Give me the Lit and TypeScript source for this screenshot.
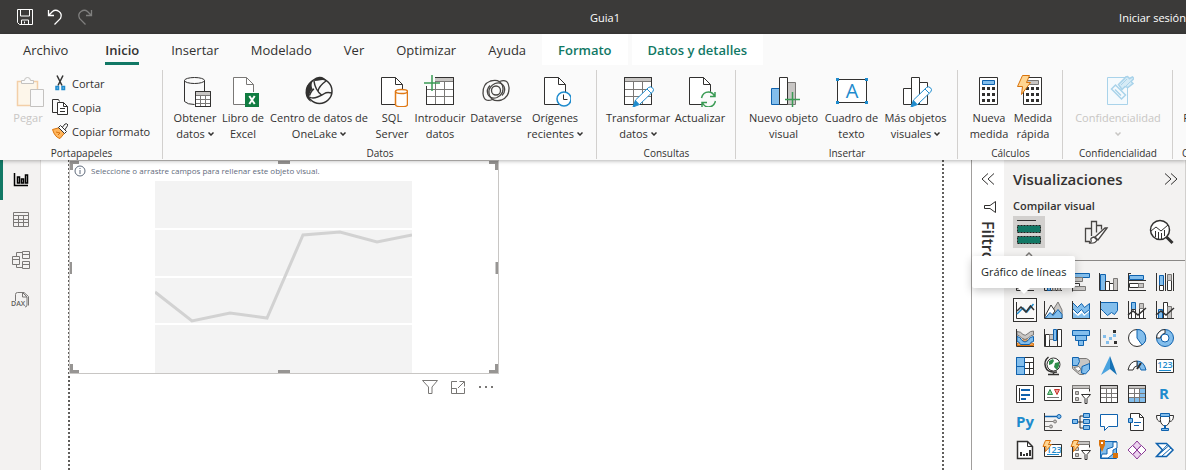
import { LitElement, html, css, svg } from "lit";
import { customElement, property, state } from "lit/decorators.js";
import { classMap } from "lit/directives/class-map.js";

const iconStyles = css`
  svg { display: block; fill: none; stroke-width: 1; flex: none; }
  .k { stroke: #323130; }
  .kw { stroke: #323130; fill: #fff; }
  .kf { fill: #323130; }
  .g { stroke: #7a7876; }
  .gf { fill: #c8c6c4; stroke: #7a7876; }
  .b { stroke: #0f62ae; }
  .bw { stroke: #0f62ae; fill: #fff; }
  .bf { stroke: #0f62ae; fill: #83beec; }
  .lf { fill: #83beec; }
  .s { stroke: #1e8bcd; }
  .sw { stroke: #1e8bcd; fill: #fff; }
  .n { stroke: #3a9b54; }
  .o { stroke: #d9730b; fill: #ffd591; }
  .w15 { stroke-width: 1.5; }
  .w2 { stroke-width: 2; }
  .glyph { font-family: "Open Sans", sans-serif; stroke: none; fill: #1e8bcd; text-anchor: middle; }
`;

const page = svg`<path class="kw" d="M5.500 2.500h14l7 7v20h-21z"/><path class="k" d="M19.500 2.500v7h7"/>`;
const pencil = svg`<path class="sw" d="M11 32l2.500-7L26.500 12.500q2-1.500 4 .3t.3 4L17.500 29.500z"/><path class="s" d="M25 14l4 4"/><path fill="#1e8bcd" d="M11 32l2.500-7 4 4.300z"/>`;
const calc = svg`<path class="kw" d="M6.500 2.500h18v27h-18z"/><path stroke="#323130" stroke-width="3" stroke-dasharray="3 2" d="M9 13.500h13M9 19.500h13M9 25.500h13"/>`;
const sheet = svg`<path class="kw" d="M2.500 2.500h27v27h-27z"/><path fill="#c8c6c4" d="M3 3h26v3H3z"/><path class="g" d="M3 6.500h26M3 14.500h26M3 21.500h26M11.500 7v22M20.500 7v22"/><path class="k" d="M2.500 2.500h27v27h-27z"/>`;
const bolt = svg`<path class="o" d="M5.500.500h7l-3 7h4l-9 12 1-8h-5z"/>`;

const big: Record<string, unknown> = {
  paste: svg`<path stroke="#f3cfa8" stroke-width="1.500" fill="#fdf6ea" d="M5.500 6.500h20v24h-20z"/><path stroke="#c4c2c0" fill="#fafafa" d="M9.500 8.500v-3h3q0-3 3-3t3 3h3v3z"/><path stroke="#c4c2c0" fill="#fafafa" d="M18.500 14.500h13v17h-13z"/>`,
  data: svg`<path class="k" d="M5.500 5.500v21q3 3 10 3M25.500 5.500v11"/><ellipse class="k" cx="15.500" cy="5.500" rx="10" ry="3"/><path class="kw" d="M16.500 16.500h15v15h-15z"/><path fill="#c8c6c4" d="M17 17h14v3H17z"/><path class="g" d="M17 20.500h14M17 24.500h14M17 28.500h14M21.500 20v11M26.500 20v11"/><path class="k" d="M16.500 16.500h15v15h-15z"/>`,
  excel: svg`<path class="g" fill="#fff" d="M26.500 17v-7.500l-7-7h-13v27h12"/><path class="g" d="M19.500 2.500v7h7"/><path fill="#107c41" d="M18 18h14v14H18z"/><path stroke="#fff" stroke-width="2" d="M22.300 21l5.400 8M27.700 21l-5.400 8"/>`,
  lake: svg`<circle class="k w15" cx="16.500" cy="16" r="12.500"/><path class="kf" d="M10.500 4.500Q13 1.500 17 1.800 21.500 2 23.500 6q-3-1.500-6-.8t-6 .8zM10 5.500Q2 9.500 2.500 18q.5 6 5.500 9-2.500-4-1.500-8 .5-3 3-5-2-4 .5-8.500z"/><path class="k w15" d="M11 6q1 9 8 14.500M23 6q-7 5-8 10M6.500 22q3 2 8 0t7-3.500 7.500-.5M6.500 20.500q2-5.500 4.500-6.500"/>`,
  sql: svg`${page}<path d="M19.500 16.500v13c0 3 12 3 12 0v-13" stroke="#e07a17" stroke-width="1.500" fill="#fff"/><ellipse cx="25.500" cy="16.500" rx="6" ry="2" stroke="#e07a17" stroke-width="1.500" fill="#fff"/>`,
  enter: svg`${sheet}<path fill="#fafafa" d="M0 0h11v7H7v4H0z"/><path class="n w15" d="M8 0v16M0 8h16"/>`,
  dataverse: svg`<g stroke="#484644" stroke-width="1.300"><ellipse cx="16" cy="15.500" rx="4.500" ry="4.500"/><path d="M12.500 24.500Q4 28 3 18.500 2.500 9 10.500 6q9-2.500 12 4.500 2.500 8-5.500 12-6 2-9-3-2-5 2-9"/><path d="M19.500 6.500Q28 3 29 12.500 29.500 22 21.500 25q-9 2.500-12-4.500-2.500-8 5.500-12 6-2 9 3 2 5-2 9"/></g>`,
  recent: svg`${page}<circle class="sw w15" cx="25" cy="24" r="7"/><path class="k" d="M24.500 19.500v5h4"/>`,
  transform: svg`${sheet}${pencil}`,
  refresh: svg`${page}<circle cx="24.500" cy="24.500" r="8" fill="#fafafa"/><path class="n w15" d="M17.500 23q1.500-6 7-6 4 0 6 4M31 17v4.500h-5M31.500 26q-1.500 6-7 6-4 0-6-4M18 32v-4.500h5"/>`,
  newVisual: svg`<path class="bf" d="M3.500 13.500h8v16h-8z"/><path class="gf" d="M19.500 7.500h8v22h-8z"/><path class="kw" d="M11.500 2.500h8v27h-8z"/><path class="n w15" d="M24.500 17v15M17 24.500h15"/>`,
  textBox: svg`<path class="kw" d="M1.500 4.500h29v23h-29z"/><path fill="#1e8bcd" d="M0 3h3v3H0zM29 3h3v3h-3zM0 26h3v3H0zM29 26h3v3h-3z"/><text class="glyph" x="16" y="23" font-size="20">A</text>`,
  moreVisuals: svg`<path class="kw" d="M3.500 13.500h8v16h-8zM19.500 7.500h8v22h-8zM11.500 2.500h8v27h-8z"/>${pencil}`,
  calc: svg`${calc}<path class="bf" d="M9.500 5.500h12v4h-12z"/>`,
  quickCalc: svg`${calc}<path class="gf" d="M9.500 5.500h12v4h-12z"/>${bolt}`,
  label: svg`<g stroke="#a9d3ea" fill="#f5fafd"><path d="M5.500 2.500h20v27h-20z"/><path d="M9.500 14l4-4 10 10-4 4zM13 14.500l6 6" stroke-width="1.500"/><path d="M16.500 9.500l6-6q1-2 3-2l2 2 3-1.500 1.500 1.500-3 3 2 2-5 4-3-1-3 3z" fill="#d6ebf6" stroke-width="1.500"/><path d="M19 10l6-6M22 13l6-6"/></g>`,
  publish: svg`<path class="kw" d="M9.500 2.500h17v27h-17z"/>`,
};

const small: Record<string, unknown> = {
  cut: svg`<path class="k w15" d="M5 .500l5 10M11 .500l-5 10"/><path class="s w15" fill="#83beec" d="M4 11.500h2.500v3H4zM10 11.500h2.500v3H10z"/>`,
  copy: svg`<path class="k" d="M5 13.500H.500V.500h6l1 2"/><path class="kw" d="M5.500 3.500h6l4 4v8h-10z"/><path class="k" d="M11.500 3.500v4h4M8 9.500h5M8 12.500h5"/>`,
  brush: svg`<path class="k" d="M9 6l4-5q2-1 3 1l-4 6z"/><path d="M.5 6.500L8 4.500l5 5-5 6q-5-1-7.500-9z" stroke="#d9730b" fill="#ffb55c"/><path class="kw" d="M6.500 4.500l2-2 6 6-2 2z"/><path stroke="#d9730b" d="M4 9l4 1-2 2"/>`,
};

const axis = svg`<path class="k" d="M3.500 3v17.500H21"/>`;
const filterGrid = svg`<path class="kw" d="M3.500 20.500v-17h17v6M3.500 20.500h9"/><path class="gf" d="M3.500 3.500h17v3h-17zM6.500 9.500h3v3h-3zM6.500 15.500h3v3h-3z"/><path class="kw" d="M12.500 12.500h9l-3.500 4v5h-2v-5z"/>`;
const miniBolt = svg`<path class="o" d="M4.500 2.500h5l-2 4h3l-6 7 .5-5h-3z"/>`;

const gallery: [string, unknown][] = [
  ["Gráfico de barras apiladas", svg`${axis}<path class="bf" d="M4 5.500h9v3H4z"/><path class="gf" d="M4 15.500h6v3H4z"/>`],
  ["Gráfico de columnas apiladas", svg`${axis}<path class="bf" d="M6.500 5.500h3v15h-3z"/><path class="gf" d="M11.500 9.500h3v11h-3zM16.500 14.500h3v6h-3z"/>`],
  ["Gráfico de barras agrupadas", svg`<path class="bf" d="M3.500 3.500h17v4h-17z"/><path class="gf" d="M3.500 7.500h10v4h-10z"/><path class="kw" d="M3.500 13.500h7v3h-7z"/><path class="gf" d="M3.500 16.500h13v4h-13z"/><path class="k" d="M3.500 3.500v18"/>`],
  ["Gráfico de columnas agrupadas", svg`<path class="bf" d="M3.500 4.500h5v16h-5z"/><path class="kw" d="M8.500 11.500h4v9h-4z"/><path class="kw" d="M12.500 13.500h4v7h-4z"/><path class="gf" d="M16.500 8.500h4v12h-4z"/><path class="k" d="M2.500 3v17.500H21"/>`],
  ["Barras 100% apiladas", svg`<path class="k" d="M3.500 3v18M4 10.500h17M4 20.500h17M4 3.500h2"/><path class="bf" d="M4.500 5.500h14v4h-14z"/><path class="kw" d="M4.500 13.500h14v4h-14z"/><path class="gf" d="M13.500 13.500h5v4h-5z"/>`],
  ["Columnas 100% apiladas", svg`<path class="k" d="M3.500 3v18M12.500 3v18M20.500 3v18"/><path class="bf" d="M6.500 5.500h4v10h-4z"/><path class="kw" d="M6.500 15.500h4v5h-4zM14.500 10.500h4v10h-4z"/><path class="gf" d="M14.500 4.500h4v6h-4z"/>`],
  ["Gráfico de líneas", svg`<path class="k" d="M3.500 4v16.500H21"/><path class="s w15" d="M4 16l6-6 4 4 6.500-8"/><path class="k w15" d="M4 13l4-4 5 5 4.500-6 3.500 4"/>`],
  ["Gráfico de áreas", svg`<path class="gf" d="M12 12l5-8 4 8v8h-9z"/><path class="kw" d="M4 18l6-11 4 6-5 7H4z"/><path class="bf" d="M4 20.500l5-6 3 3 5-6 4 5v4z"/><path class="k" d="M3.500 3v17.500H21"/>`],
  ["Gráfico de áreas apiladas", svg`<path class="bf" d="M3.500 12.500l5 4 4-3 3 3 5-4v8h-17z"/><path fill="#fff" d="M4 9l5 4 4-3 3 3 4-3v4l-5 4-2-3-4 3-5-4z"/><path class="bf" d="M3.500 4.500l5 5 4-4 3 4 5-4v6l-5 4-3-4-4 4-5-5z"/><path class="k" d="M3.500 3v17.500H21"/>`],
  ["Áreas 100% apiladas", svg`<path class="bf" d="M3.500 4.500h17v8l-3 4-3-2-4 3-4-4-3-3z"/><path class="k" d="M3.500 3v17.500H21"/>`],
  ["Líneas y columnas apiladas", svg`<path class="bf" d="M6.500 4.500h4v7h-4z"/><path class="kw" d="M6.500 11.500h4v9h-4zM14.500 10.500h4v10h-4z"/><path class="gf" d="M14.500 5.500h4v5h-4z"/>${axis}<path class="k w15" d="M3 17l5-4 5 4 8-7"/>`],
  ["Líneas y columnas agrupadas", svg`<path class="bf" d="M5.500 11.500h4v9h-4z"/><path class="kw" d="M10.500 4.500h4v16h-4z"/><path class="gf" d="M14.500 8.500h4v12h-4z"/>${axis}<path class="k w15" d="M3 17l5-4 5 4 8-7"/>`],
  ["Gráfico de la barra de herramientas", svg`<path stroke="#d9730b" fill="#f0a35a" d="M4 17.500q4 0 6-4 3-2 5 1t5.500 3v2H4z"/><path class="bf" d="M4 10.500q3 0 5 4 3 3 6 0 2-4 5.500-4v5q-3 0-4 3h-9q-1-3-3.500-3z"/><path class="gf" d="M4 5.500q4 0 6 3 2 2 5-1 2-2.500 5.500-2.500v4q-3 0-5 3-3.500 3-7 0-2-3-4.500-3z"/>${axis}`],
  ["Gráfico de cascada", svg`${axis}<path class="kw" d="M4.500 8.500h4v12h-4z"/><path class="gf" d="M8.500 8.500h4v5h-4z"/><path class="bf" d="M12.500 3.500h3v11h-3z"/><path class="kw" d="M16.500 3.500h4v17h-4z"/>`],
  ["Embudo", svg`<path class="bf" d="M3.500 4.500h17v5h-17zM6.500 9.500h11v5h-11zM9.500 14.500h5v5h-5z"/>`],
  ["Gráfico de dispersión", svg`<path class="g" d="M3.500 3v17.500H21"/><path class="lf" d="M6 9h3v3H6zM12 11h3v3h-3zM16 8h3v3h-3zM9 15h3v3H9z"/><path class="kf" d="M16 4h3v3h-3zM17 15h3v3h-3z"/>`],
  ["Gráfico circular", svg`<circle class="kw" cx="12" cy="12" r="8.500"/><path class="bf" d="M12 3.500a8.500 8.500 0 0 1 5 15.500L12 12z"/>`],
  ["Gráfico de anillos", svg`<circle class="bf" cx="12" cy="12" r="8.500"/><path class="kw" d="M3.500 12A8.500 8.500 0 0 1 12 3.500v4A4.500 4.500 0 0 0 7.500 12z"/><circle class="bw" cx="12" cy="12" r="4"/>`],
  ["Treemap", svg`<path class="kw" d="M3.500 3.500h17v17h-17z"/><path class="bf" d="M3.500 3.500h8v17h-8z"/><path class="b" d="M4 12.500h7"/><path class="k" d="M12 8.500h8M12 14.500h8M16.500 9v11"/>`],
  ["Mapa", svg`<circle class="kw" cx="12.500" cy="10.500" r="6.500"/><path fill="#2f8f4b" d="M8 7l4-2 1 2-2 3-3 1zM14 9l4-1v4l-2 4-3-3z"/><path class="k w15" d="M7.500 3Q2.500 7 4.500 13t11.500 5M7 20.500h11M12.500 18v2"/>`],
  ["Mapa coroplético", svg`<path class="gf" d="M3.500 4.500h14l3 2v8l-6 6h-4l-7-6z"/><path class="bf" d="M3.500 3.500h6l1 4-2 4h-5zM13 12.500l7.500-3v6l-4 4.500-4-1z"/><path fill="#fff" stroke="#7a7876" d="M5 13.500l5-1 2 3-3 2z"/>`],
  ["Azure Maps", svg`<path fill="#4aa3df" d="M13 2L4 21l9-6z"/><path fill="#1672b5" d="M13 2l7 19-7-6z"/>`],
  ["Medidor", svg`<path class="bf" d="M12 7q7 0 9 9h-5q-1-4-4-4z"/><path class="kw" d="M3 16q2-9 9-9v5q-3 0-4 4z"/><path class="k w2" d="M12 15l4-6"/>`],
  ["Tarjeta", svg`<path class="kw" d="M3.500 5.500h17v13h-17z"/><text class="glyph" x="12" y="14" font-size="9" font-weight="600">123</text><path class="s" d="M6 16.500h12"/>`],
  ["Tarjeta de varias filas", svg`<path class="kw" d="M3.500 3.500h17v17h-17z"/><path class="b w2" d="M8 8h9M8 13h9M8 17h5"/><path class="k" d="M6.500 6v13"/>`],
  ["KPI", svg`<path class="kw" d="M3.500 4.500h17v14h-17z"/><path stroke="#2f8f4b" fill="#8fcf9f" d="M6.500 12.500l2.500-5 2.500 5z"/><path stroke="#c8352f" fill="#f09a96" d="M13.500 7.500h5l-2.500 5z"/><path class="g" d="M6 15.500h12"/>`],
  ["Segmentación de datos", filterGrid],
  ["Tabla", svg`<path class="kw" d="M3.500 3.500h17v17h-17z"/><path class="gf" d="M3.500 3.500h17v3h-17z"/><path class="g" d="M4 11.500h16M4 15.500h16M9.500 7v13M14.500 7v13"/><path class="k" d="M3.500 3.500h17v17h-17z"/>`],
  ["Matriz", svg`<path class="kw" d="M3.500 3.500h17v17h-17z"/><path class="gf" d="M3.500 3.500h17v3h-17z"/><path class="lf" d="M15 7h5v13H4v-4h11z"/><path class="g" d="M4 11.500h16M4 15.500h16M9.500 7v13M14.500 7v13"/><path class="k" d="M3.500 3.500h17v17h-17z"/>`],
  ["Objeto visual de R", svg`<text class="glyph" x="11" y="17" font-size="15" font-weight="700">R</text>`],
  ["Objeto visual de Python", svg`<text class="glyph" x="12" y="17" font-size="15" font-weight="700">Py</text>`],
  ["Elementos influyentes clave", svg`<path class="k" d="M3.500 3v17.500H21"/><path class="b w15" d="M4 6.500h12"/><circle class="bf" cx="18" cy="6.500" r="2"/><path class="g" d="M4 11.500h8M4 16.500h4"/><circle class="gf" cx="14" cy="11.500" r="1.500"/><circle class="gf" cx="10" cy="16.500" r="1.500"/>`],
  ["Esquema jerárquico", svg`<path class="k" d="M8 12h6M14 6h-3v12h3"/><path class="bf" d="M3.500 9.500h5v4h-5zM14.500 3.500h6v4h-6zM14.500 9.500h6v4h-6zM14.500 15.500h6v4h-6z"/>`],
  ["Preguntas y respuestas", svg`<path class="bw" d="M3.500 4.500h17v12h-9l-4 4v-4h-4z"/>`],
  ["Narración", svg`<path class="kw" d="M5.500 3.500h9l4 4v13h-13z"/><path class="k" d="M14.500 3.500v4h4"/><path class="bf" d="M3.500 8.500h4v4h-4z"/><path class="b" d="M9 12.500h7M9 15.500h5"/>`],
  ["Objetivos", svg`<path class="kw" d="M7.500 6.500h9q1 7-3 9h-3q-4-2-3-9zM7 5.500H3.500q0 6 4 6M17 5.500h3.500q0 6-4 6"/><path class="bf" d="M7.500 3.500h9v3h-9zM8.500 18.500h7v2h-7z"/><path class="b w2" d="M12 15v4"/>`],
  ["Informe paginado", svg`<path class="kw w15" d="M4.500 3.500h10l5 5v12h-15z"/><path class="k" d="M14.500 3.500v5h5"/><path class="k w2" d="M8 18v-4M11 18v-2M14 18v-3M17 18v-6"/>`],
  ["Tarjeta nueva", svg`<path class="kw" d="M3.500 6.500h17v12h-17z"/><text class="glyph" x="13" y="15" font-size="9" font-weight="600">123</text><path class="s" d="M6 16.500h12"/>${miniBolt}`],
  ["Segmentación nueva", svg`${filterGrid}${miniBolt}`],
  ["ArcGIS Maps", svg`<path class="bf" d="M3.500 3.500h16v17h-16z"/><path fill="#fff" stroke="#0f62ae" d="M4 20l1-4h5v-5l6-2V4h4v6l-4 2v4l-5 4z"/><path fill="#d9730b" d="M2 2h6v5l-3 7-3-7zM16 15h5v5h-5z"/><path fill="#fff" d="M4 4h2v2H4z"/>`],
  ["Power Apps", svg`<g stroke="#8b3a96" fill="#ecd3ef"><path d="M12 3l4 4.500-4 4.500-4-4.500zM12 12l4 4.500-4 4.500-4-4.500z"/><path fill="#fff" d="M7.500 7.500L12 12l-4.500 4.500L3 12zM16.500 7.500L21 12l-4.500 4.500L12 12z"/></g>`],
  ["Power Automate", svg`<path class="bw w15" d="M3.500 5.500h10l6.500 6.500-6.500 6.500h-10L9.500 12z"/><path class="b" d="M9.500 12l5-5.500M5 17l10.500-9M9 18l9-8"/>`],
];

const nav: [string, unknown][] = [
  ["Vista de informe", svg`<path stroke="#000" stroke-width="1.500" d="M5.500 5v12.500H19M8.500 15v-6h2v6zM12.500 15v-4h2v4zM16.500 15V7h2v8z"/>`],
  ["Vista de tabla", svg`<path class="g" d="M4.500 4.500h15v14h-15zM4.500 7.500h15M4.500 11.500h15M4.500 14.500h15M9.500 7.500v11M14.500 7.500v11"/>`],
  ["Vista de modelo", svg`<path class="g" d="M3.500 8.500h7v8h-7zM3.500 11.500h7M13.500 3.500h7v7h-7zM13.500 6.500h7M13.500 13.500h7v7h-7zM13.500 16.500h7M7.500 8v-3.500h6M7.500 17v2.500h6"/>`],
  ["Vista de consultas DAX", svg`<path class="g" d="M6.500 13V6.500q0-2 2-2h5l4.500 4.500v8q0 2-2 2M13.500 4.500V9H18M9 4.500h6l4.500 4v9"/><path fill="#f3f2f1" d="M2 13h14v6H2z"/><text x="2" y="18" font-size="7" fill="#605e5c" font-family="Open Sans" font-weight="600">DAX</text>`],
];

interface Command { icon: string; lines: string[]; menu?: boolean; off?: boolean }

@customElement("ribbon-group")
class RibbonGroup extends LitElement {
  @property() caption = "";
  @property({ attribute: false }) commands: Command[] = [];

  static styles = [iconStyles, css`
    :host { display: flex; flex-direction: column; flex: none; padding: 5px 8px 0 9px; border-right: 1px solid #d2d0ce; color: #323130; box-sizing: border-box; }
    .items { display: grid; grid-template-columns: var(--columns); flex: 1; align-items: start; }
    button { display: flex; flex-direction: column; align-items: center; padding: 0; border: 0; background: none; font: inherit; line-height: 16px; color: inherit; white-space: nowrap; min-width: 0; }
    .icon { width: 32px; height: 32px; margin-bottom: 3px; }
    .line { display: flex; align-items: center; gap: 3px; height: 16px; }
    .off { color: #c8c6c4; }
    .arrow { width: 6px; height: 4px; stroke: currentColor; stroke-width: 1.5; }
    .caption { font-size: 10px; line-height: 12px; text-align: center; white-space: nowrap; }
  `];

  render() {
    const arrow = html`<svg class="arrow" viewBox="0 0 6 4"><path d="M.500 .500L3 3 5.500 .500"/></svg>`;
    return html`
      <div class="items">
        ${this.commands.map((c) => html`
          <button class=${classMap({ off: !!c.off })} ?disabled=${!!c.off}>
            <svg class="icon" viewBox="0 0 32 32">${big[c.icon]}</svg>
            ${c.lines.map((l, i) => html`<span class="line">${l}${c.menu && i === c.lines.length - 1 ? arrow : ""}</span>`)}
          </button>`)}
        <slot></slot>
      </div>
      <div class="caption">${this.caption}</div>`;
  }
}

@customElement("app-root")
class AppRoot extends LitElement {
  @state() private tab = "Inicio";
  @state() private visual = "Gráfico de líneas";

  static styles = [iconStyles, css`
    :host { display: flex; flex-direction: column; height: 100vh; overflow: hidden; font-family: "Open Sans", "Noto Sans", sans-serif; font-size: 11px; color: #323130; background: #fff; }
    button { font: inherit; color: inherit; background: none; border: 0; padding: 0; }
    header { display: grid; grid-template-columns: 1fr auto 1fr; align-items: center; flex: none; height: 34px; background: #3b3a39; color: #fff; box-sizing: border-box; overflow: hidden; }
    .quick { display: flex; gap: 10px; padding-left: 15px; stroke: #fff; }
    .quick .faded { opacity: .35; }
    .doc { padding-left: 24px; }
    .signin { justify-self: end; white-space: nowrap; }
    .top { flex: none; background: #fafafa; height: 126px; display: flex; flex-direction: column; overflow: hidden; }
    .shade { flex: none; position: relative; z-index: 1; box-shadow: 0 1px 4px rgba(0, 0, 0, .3); }
    .tabs { display: flex; height: 31px; flex: none; font-size: 13px; }
    .tab { padding: 0 16px; white-space: nowrap; }
    .file { padding: 0 21px 0 23px; }
    .tab span { display: block; height: 31px; line-height: 32px; }
    .tab.on { font-weight: 600; }
    .tab.on span { box-shadow: inset 0 -3px #117865; }
    .ctx { background: #fff; color: #117865; font-weight: 600; margin-right: 4px; }
    .ribbon { display: flex; flex: 1; padding: 5px 0 1px; }
    .clip { --columns: 38px 1fr; width: 163px; }
    .datos { --columns: 46px 50px 102px 44px 52px 60px 58px; width: 434px; }
    .consultas { --columns: 64px 60px; width: 139px; }
    .insertar { --columns: 77px 59px 69px; width: 222px; }
    .calculos { --columns: 44px 44px; width: 105px; }
    .conf { --columns: 92px; width: 110px; }
    .share { --columns: 44px; width: 62px; }
    .stack { display: flex; flex-direction: column; padding-left: 5px; margin-top: -4px; }
    .row { display: flex; align-items: center; gap: 4px; height: 24px; white-space: nowrap; }
    .row svg { width: 16px; height: 16px; }
    main { display: flex; flex: 1; min-height: 0; }
    nav { flex: none; width: 40px; background: #f3f2f1; border-right: 1px solid #e1dfdd; display: flex; flex-direction: column; }
    nav button { height: 40px; display: flex; align-items: center; justify-content: center; border-left: 3px solid transparent; padding-right: 1px; }
    nav .on { border-color: #117865; }
    .i24 { width: 24px; height: 24px; }
    .canvas { flex: 1; min-width: 0; padding: 0 27px; background: #fff; }
    .sheet { height: 100%; box-sizing: border-box; padding: 0 2px; background: repeating-linear-gradient(#605e5c 0 2px, transparent 2px 4px) left / 2px 100% no-repeat, repeating-linear-gradient(#605e5c 0 2px, transparent 2px 4px) right / 2px 100% no-repeat; }
    .visual { position: relative; width: 430px; height: 214px; box-sizing: border-box; border: 1px solid #c8c6c4; margin-left: -1px; padding: 4px 6px 0 4px; display: flex; flex-direction: column; align-items: stretch; }
    .hint { display: flex; align-items: center; gap: 5px; font-size: 8px; line-height: 12px; color: #5f6b7c; }
    .hint svg { width: 12px; height: 12px; }
    .plot { display: block; width: 257px; height: 192px; margin: 4px auto 0; }
    .handles { position: absolute; inset: 0; width: 100%; height: 100%; }
    .tools { display: flex; justify-content: flex-end; gap: 12px; width: 429px; margin-top: 5px; padding-right: 5px; box-sizing: border-box; }
    .tools svg { width: 16px; height: 16px; stroke: #797775; }
    .filters { flex: none; width: 33px; box-sizing: border-box; border-left: 1px solid #a19f9d; display: flex; flex-direction: column; align-items: center; padding-top: 11px; background: #fff; }
    .filters .chev { margin-bottom: 14px; }
    .funnel { width: 12px; height: 12px; margin-left: 4px; }
    .filters h2 { writing-mode: vertical-rl; margin: 8px 0 0; font-size: 16px; line-height: 22px; font-weight: 600; }
    .chev { width: 16px; height: 16px; stroke: #323130; }
    .panel { flex: none; width: 182px; box-sizing: border-box; background: #f3f2f1; border-right: 1px solid #d2d0ce; position: relative; }
    .head { display: flex; justify-content: space-between; align-items: center; padding: 8px 6px 0 9px; }
    .head h2 { margin: 0; font-size: 15px; line-height: 22px; font-weight: 600; }
    h3 { margin: 8px 0 2px 9px; font-size: 11px; line-height: 16px; font-weight: 600; }
    .modes { display: flex; gap: 34px; padding-left: 9px; height: 44px; border-bottom: 1px solid #8a8886; }
    .mode { width: 32px; height: 32px; }
    .mode.on { background: #d2d0ce; }
    .grid { display: grid; grid-template-columns: repeat(6, 28px); grid-auto-rows: 28px; padding: 7px 0 0 7px; }
    .grid button { display: flex; align-items: center; justify-content: center; box-sizing: border-box; width: 24px; height: 24px; margin: 2px; }
    .grid .on { outline: 1px solid #323130; outline-offset: -1px; background: #faf9f8; }
    .tip { position: absolute; left: -32px; top: 96px; padding: 0 9px; line-height: 32px; background: #fff; color: #201f1e; box-shadow: 0 3px 10px rgba(0, 0, 0, .22); border-radius: 2px; white-space: nowrap; }
    .tip::after { content: ""; position: absolute; left: 46px; top: 100%; border: 6px solid transparent; border-top-color: #fff; border-bottom: 0; }
  `];

  render() {
    const tabs = ["Archivo", "Inicio", "Insertar", "Modelado", "Ver", "Optimizar", "Ayuda"];
    return html`
      <header>
        <div class="quick">
          <button aria-label="Guardar"><svg width="20" height="20" viewBox="0 0 20 20"><path d="M2.500 2.500h15v15h-13l-2-2zM5.500 3v6h9V3M6.500 17v-4h7v4M9.500 14.500v2"/></svg></button>
          <button aria-label="Deshacer"><svg width="20" height="20" viewBox="0 0 20 20"><path stroke-width="1.300" d="M3.500 3v5.500H9M3.500 8.500l4-4q3-2.500 6.500 0t1.500 7l-6 6"/></svg></button>
          <button class="faded" aria-label="Rehacer"><svg width="20" height="20" viewBox="0 0 20 20"><path stroke-width="1.300" d="M16.500 3v5.500H11M16.500 8.500l-4-4q-3-2.500-6.500 0t-1.500 7l6 6"/></svg></button>
        </div>
        <span class="doc">Guia1</span>
        <button class="signin">Iniciar sesión</button>
      </header>
      <div class="shade"><div class="top">
        <div class="tabs">
          ${tabs.map((t) => html`<button class=${classMap({ tab: true, file: t === "Archivo", on: t === this.tab })} @click=${() => (this.tab = t)}><span>${t}</span></button>`)}
          <button class="tab ctx"><span>Formato</span></button>
          <button class="tab ctx"><span>Datos y detalles</span></button>
        </div>
        <div class="ribbon">
          <ribbon-group class="clip" caption="Portapapeles" .commands=${[{ icon: "paste", lines: ["Pegar"], off: true }]}>
            <div class="stack">
              ${[["cut", "Cortar"], ["copy", "Copia"], ["brush", "Copiar formato"]].map(([i, t]) => html`<button class="row"><svg viewBox="0 0 16 16">${small[i]}</svg>${t}</button>`)}
            </div>
          </ribbon-group>
          <ribbon-group class="datos" caption="Datos" .commands=${[
            { icon: "data", lines: ["Obtener", "datos"], menu: true },
            { icon: "excel", lines: ["Libro de", "Excel"] },
            { icon: "lake", lines: ["Centro de datos de", "OneLake"], menu: true },
            { icon: "sql", lines: ["SQL", "Server"] },
            { icon: "enter", lines: ["Introducir", "datos"] },
            { icon: "dataverse", lines: ["Dataverse"] },
            { icon: "recent", lines: ["Orígenes", "recientes"], menu: true },
          ]}></ribbon-group>
          <ribbon-group class="consultas" caption="Consultas" .commands=${[
            { icon: "transform", lines: ["Transformar", "datos"], menu: true },
            { icon: "refresh", lines: ["Actualizar"] },
          ]}></ribbon-group>
          <ribbon-group class="insertar" caption="Insertar" .commands=${[
            { icon: "newVisual", lines: ["Nuevo objeto", "visual"] },
            { icon: "textBox", lines: ["Cuadro de", "texto"] },
            { icon: "moreVisuals", lines: ["Más objetos", "visuales"], menu: true },
          ]}></ribbon-group>
          <ribbon-group class="calculos" caption="Cálculos" .commands=${[
            { icon: "calc", lines: ["Nueva", "medida"] },
            { icon: "quickCalc", lines: ["Medida", "rápida"] },
          ]}></ribbon-group>
          <ribbon-group class="conf" caption="Confidencialidad" .commands=${[{ icon: "label", lines: ["Confidencialidad", ""], menu: true, off: true }]}></ribbon-group>
          <ribbon-group class="share" caption="Compartir" .commands=${[{ icon: "publish", lines: ["Publicar"] }]}></ribbon-group>
        </div>
      </div></div>
      <main>
        <nav>
          ${nav.map(([t, i], n) => html`<button class=${n === 0 ? "on" : ""} aria-label=${t}><svg class="i24" viewBox="0 0 24 24">${i}</svg></button>`)}
        </nav>
        <section class="canvas"><div class="sheet">
          <div class="visual">
            <div class="hint"><svg viewBox="0 0 12 12"><circle cx="6" cy="6" r="5" stroke="#5f6b7c"/><path stroke="#5f6b7c" d="M6 5v4M6 3v1"/></svg>Seleccione o arrastre campos para rellenar este objeto visual.</div>
            <svg class="plot" viewBox="0 0 257 192"><path fill="#f3f3f3" d="M0 0h257v192H0z"/><path stroke="#fff" stroke-width="2" d="M0 48h257M0 96h257M0 143h257"/><path stroke="#d2d2d2" stroke-width="3" d="M0 111l37 29 38-8 37 5 36-83 37-3 37 10 35-7"/></svg>
            <svg class="handles" viewBox="0 0 428 212"><path stroke="#979593" stroke-width="3" d="M1.500 9V1.500H9M419 1.500h7.500V9M1.500 203v7.500H9M419 210.500h7.500V203M208 1.500h12M208 210.500h12M.500 101v12M427 101v12"/></svg>
          </div>
          <div class="tools">
            <button aria-label="Filtros"><svg viewBox="0 0 16 16"><path d="M.500 1.500h15L10 8v6.500H6.500V8z"/></svg></button>
            <button aria-label="Modo de enfoque"><svg viewBox="0 0 16 16"><path d="M7 2.500H1.500v12h13V9M1.500 9.500h5v5M9.500 2.500h5v5M14 3L8 9"/></svg></button>
            <button aria-label="Más opciones"><svg viewBox="0 0 16 16"><path stroke-width="2" stroke-dasharray="2 4" d="M1 8h14"/></svg></button>
          </div>
        </div></section>
        <aside class="filters">
          <button aria-label="Expandir" class="chev"><svg class="chev" viewBox="0 0 16 16"><path d="M8 2.500L2 8l6 5.500M14 2.500L8 8l6 5.500"/></svg></button>
          <svg class="funnel" viewBox="0 0 12 12"><path class="k" d="M11.500.500v11L6 7.500H.500v-3H6z"/></svg>
          <h2>Filtros</h2>
        </aside>
        <aside class="panel">
          <div class="head"><h2>Visualizaciones</h2><button class="chev" aria-label="Contraer"><svg class="chev" viewBox="0 0 16 16"><path d="M2 2.500L8 8l-6 5.500M8 2.500L14 8l-6 5.500"/></svg></button></div>
          <h3>Compilar visual</h3>
          <div class="modes">
            <button class="mode on" aria-label="Compilar"><svg width="32" height="44" viewBox="0 0 32 44"><path class="k" d="M4 4.500h19"/><path fill="#117865" stroke="#201f1e" stroke-dasharray="2 1" d="M4.500 9.500h23v7h-23zM4.500 20.500h23v7h-23z"/><path class="g w15" d="M13 40l3-3 3 3"/></svg></button>
            <button class="mode" aria-label="Formato"><svg width="32" height="32" viewBox="0 0 32 32"><path stroke="#484644" stroke-width="1.300" d="M11 25.500H6.500v-13h6M12.500 20V5.500h5v11M17.500 9.500h5v4"/><path stroke="#484644" stroke-width="1.300" fill="#fff" d="M28 12l-9 12-3-3L26 12zM15 21l3 3q-2 4-8 3 3-1 2-3t3-3z"/></svg></button>
            <button class="mode" aria-label="Análisis"><svg width="32" height="32" viewBox="0 0 32 32"><circle stroke="#323130" stroke-width="1.500" fill="#fff" cx="15" cy="14" r="9.500"/><path class="k" d="M6 15l5-4 5 4 7-6M10.500 15v6M13.500 16v7M16.500 17v6M19.500 14v6"/><path stroke="#323130" stroke-width="3" d="M21.500 21l6 6"/></svg></button>
          </div>
          <div class="grid">
            ${gallery.map(([t, i]) => html`<button class=${classMap({ on: t === this.visual })} aria-label=${t} @click=${() => (this.visual = t)}><svg class="i24" viewBox="0 0 24 24">${i}</svg></button>`)}
          </div>
          <div class="tip" role="tooltip">Gráfico de líneas</div>
        </aside>
      </main>`;
  }
}
